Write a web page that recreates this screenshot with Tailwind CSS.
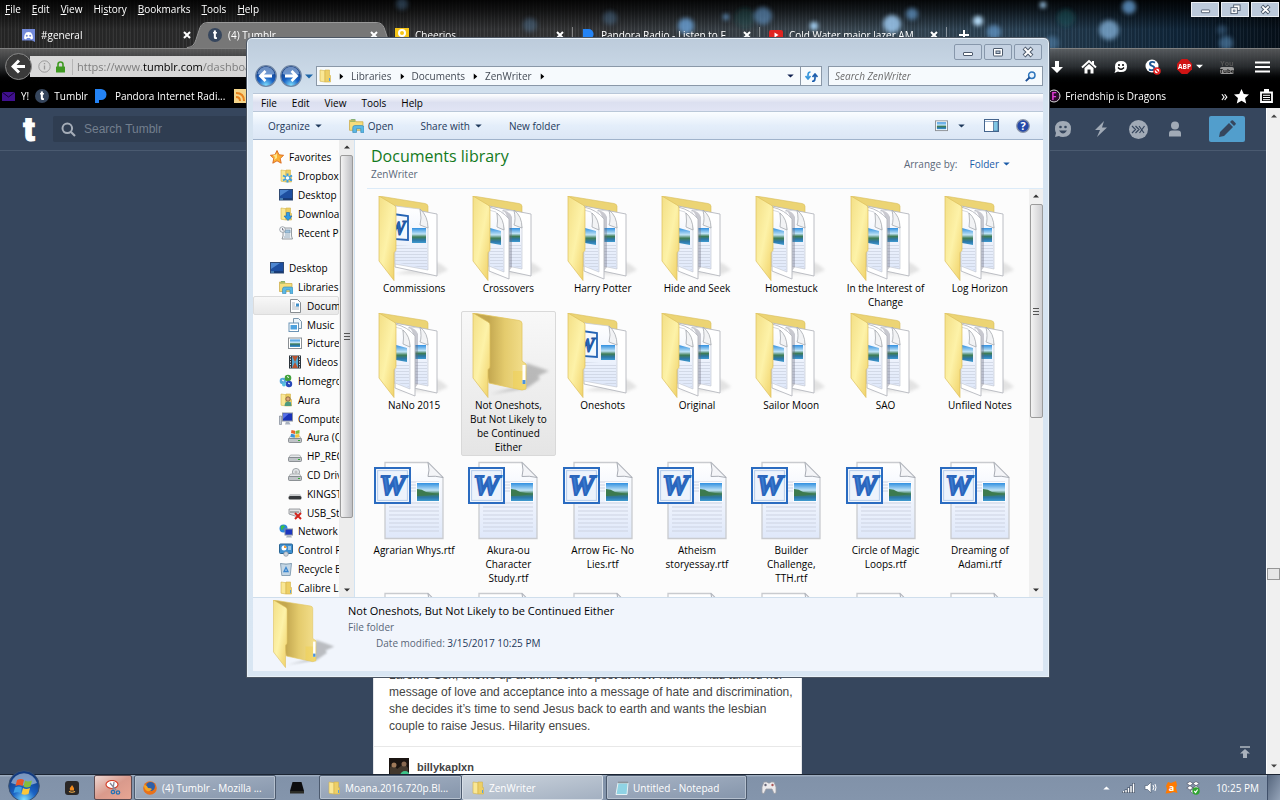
<!DOCTYPE html>
<html lang="en">
  <head>
    <meta charset="UTF-8" />
    <meta name="viewport" content="width=device-width, initial-scale=1.0" />
    <title>(4) Tumblr</title>
    <script src="https://cdn.jsdelivr.net/npm/@tailwindcss/browser@4"></script>
  </head>
  <body class="relative h-screen flex flex-col overflow-hidden bg-[#36465d] font-['Open_Sans',sans-serif] text-[10px] leading-4 text-black">
    <!-- shared icons -->
    <svg class="absolute size-0" aria-hidden="true">
      <defs>
        <linearGradient id="flap" x1="0" x2="1" y2="1"><stop offset="0" stop-color="#f3df86" /><stop offset=".5" stop-color="#fdf2a8" /><stop offset="1" stop-color="#efcf63" /></linearGradient>
        <linearGradient id="back" x1="0" x2="1"><stop offset=".3" stop-color="#c4a850" /><stop offset=".6" stop-color="#e4cb6d" /><stop offset="1" stop-color="#f4e08e" /></linearGradient>
        <linearGradient id="sheet" y1="0" y2="1" x2="0"><stop offset="0" stop-color="#fff" /><stop offset="1" stop-color="#dfe8fa" /></linearGradient>
        <linearGradient id="photo" y1="0" y2="1" x2="0"><stop offset="0" stop-color="#2f8fe0" /><stop offset=".4" stop-color="#bfe2f5" /><stop offset=".6" stop-color="#3f7d55" /><stop offset=".8" stop-color="#2d78a8" /><stop offset="1" stop-color="#3f9bd0" /></linearGradient>
        <radialGradient id="orb" cy=".95" r=".85"><stop offset="0" stop-color="#7fe0ff" /><stop offset=".45" stop-color="#1a62c4" /><stop offset="1" stop-color="#123a80" /></radialGradient>
        <pattern id="lines" width="4" height="3" patternUnits="userSpaceOnUse"><path d="M0 1.5h4" stroke="#c9d0de" stroke-width=".7" /></pattern>
        <filter id="soft"><feGaussianBlur stdDeviation="1.5" /></filter>

        <symbol id="word-logo" viewBox="0 0 36 36">
          <rect x="1" y="1" width="34" height="34" fill="#fff" stroke="#2a6bc0" stroke-width="2" />
          <rect x="3.500" y="3.500" width="29" height="29" fill="#edf3fc" stroke="#b7cdec" />
          <text x="18" y="27.500" text-anchor="middle" font-family="Liberation Serif" font-weight="bold" font-style="italic" font-size="29" fill="#3a7ad0" stroke="#2a66bd" stroke-width="1.800">W</text>
        </symbol>
        <symbol id="rtf" viewBox="0 -1 86 85">
          <path d="M14 3.500h43l15 15V79.500H14z" fill="url(#sheet)" stroke="#c9cbcf" stroke-width="1.300" />
          <path d="M18 23h50M18 26h50M18 29h50M18 32h50M18 44h50M18 48h50M18 52h50M18 56h50M18 60h50M18 64h50M18 68h50M18 72h50" stroke="#cdd3e2" />
          <path d="M57 3.500q2 8 0 14q7-1 15 1z" fill="#f4f5f8" stroke="#a9adb5" />
          <rect x="45" y="23" width="24" height="20" fill="#fafcff" />
          <rect x="46" y="24" width="22" height="18" fill="url(#photo)" />
          <path d="M46 30q5 0 9 3 6 1 13 2-12 2-22 2z" fill="#3d7a4e" />
          <use href="#word-logo" x="3" y="8" width="37" height="37" />
        </symbol>
        <symbol id="folder-back" viewBox="0 0 86 85">
          <path d="M24 78L66 79l11-5q-6-6-12-8z" fill="#999" opacity=".25" filter="url(#soft)" />
          <path d="M8 0l46 7.500q3 .5 3 3V30H24z" fill="#ecd474" stroke="#d9bd5c" stroke-width=".6" />
        </symbol>
        <symbol id="folder-flap" viewBox="0 0 86 85">
          <path d="M8 0l15 9q2 1 2 3v41q0 2-1 2.500q-1 .5-1 2V84.500L8 65z" fill="url(#flap)" stroke="#dcbf5b" stroke-width=".7" />
        </symbol>
        <symbol id="folder-word" viewBox="0 0 86 85">
          <use href="#folder-back" width="86" height="85" />
          <path d="M24 10l42 8v62L24 71z" fill="#fff" stroke="#b5b8be" stroke-width=".9" />
          <path d="M24 10l25 3 8 18v43L24 68z" fill="url(#sheet)" stroke="#c6cad2" stroke-width=".7" />
          <path d="M24 49l32 2v22L24 66z" fill="url(#lines)" />
          <path d="M49 13q2 10 0 16l8 3q0-12-8-19z" fill="#f2f3f5" stroke="#a6a9ae" stroke-width=".8" />
          <rect x="41" y="32" width="14" height="15" fill="url(#photo)" />
          <path d="M22 18l15 2v24l-15-1z" fill="#f4f8fd" stroke="#2463b4" stroke-width="1.800" />
          <text x="17" y="39" font-family="Liberation Serif" font-weight="bold" font-style="italic" font-size="20" fill="#2b69bb" stroke="#1d56a3">W</text>
          <use href="#folder-flap" width="86" height="85" />
        </symbol>
        <symbol id="folder-pages" viewBox="0 0 86 85">
          <use href="#folder-back" width="86" height="85" />
          <path d="M24 10l42 8v62L24 71z" fill="#fff" stroke="#b5b8be" stroke-width=".9" />
          <path d="M38 14l11 1 8 16v42l-19-4z" fill="url(#sheet)" stroke="#c6cad2" stroke-width=".7" />
          <path d="M49 14q2 10 0 15l8 3q0-12-8-18z" fill="#f2f3f5" stroke="#a6a9ae" stroke-width=".8" />
          <rect x="44" y="32" width="11" height="14" fill="url(#photo)" />
          <path d="M44 49h12v23l-12-3z" fill="url(#lines)" />
          <path d="M42 21q-1-5-5-7q8 1 10 7v50l-3 4z" fill="#667" opacity=".35" />
          <path d="M24 11q13 3 20 12V83L24 75z" fill="#fff" stroke="#b5b8be" stroke-width=".9" />
          <path d="M24 14l7 2 8 16v44l-15-6z" fill="url(#sheet)" stroke="#c6cad2" stroke-width=".7" />
          <path d="M32 17q1 9 0 14l7 3q0-11-7-17z" fill="#f2f3f5" stroke="#a6a9ae" stroke-width=".8" />
          <path d="M25 32l11 3v14l-11-2z" fill="url(#photo)" />
          <path d="M25 50l13 2v22l-13-5z" fill="url(#lines)" />
          <use href="#folder-flap" width="86" height="85" />
        </symbol>
        <symbol id="folder-empty" viewBox="0 0 86 85">
          <path d="M61 50q12 4 23 8l-11 5 2 3-13 9-36 6 30-8z" fill="#555" opacity=".35" filter="url(#soft)" />
          <path d="M8 0l46 7.500q3 .5 3 3V48l4 3v25l-4 1-33-7z" fill="url(#back)" stroke="#e3c761" stroke-width=".8" />
          <path d="M48 58h13v18l-4 1-9-2z" fill="#efd04f" opacity=".5" />
          <rect x="57.500" y="52" width="3" height="19" fill="#fff" />
          <rect x="57.500" y="67" width="3" height="4" fill="#4c93dd" />
          <use href="#folder-flap" width="86" height="85" />
        </symbol>

        <symbol id="star" viewBox="0 0 14 14"><path d="M7 .5l2 4.300 4.600.5-3.400 3.200 1 4.700L7 10.800 2.800 13.200l1-4.700L.4 5.300 5 4.800z" fill="#fbb034" stroke="#d9661c" stroke-width=".9" /><path d="M7 3v5l-3 2 1-3-2-2 3-.5z" fill="#ffe58a" /></symbol>
        <symbol id="mini" viewBox="0 0 14 14"><path d="M2 1l5 .7V13l-5-.8z" fill="#f9e795" stroke="#d3b34c" stroke-width=".6" /><path d="M7 1h4.500v5.500h1V13H7z" fill="#edcf66" stroke="#d3b34c" stroke-width=".6" /><path d="M11 9h1v3h-1z" fill="#5aa0dd" /></symbol>
        <symbol id="dropbox" viewBox="0 0 14 14"><use href="#mini" width="14" height="14" /><path d="M8.500 4.500v9M4 6.500l9 5M13 6.500l-9 5" stroke="#3f9fe0" stroke-width="2" /><circle cx="8.500" cy="9" r="1.700" fill="#fff" /></symbol>
        <symbol id="screen" viewBox="0 0 14 14"><rect x=".5" y="1.500" width="13" height="10.500" fill="#1e4fa0" stroke="#314a72" /><path d="M1 2h9L1 8z" fill="#4d86d0" /><path d="M1 10.500h12v1H1z" fill="#132c58" /><path d="M1 10.500h3v1H1z" fill="#74bfe8" /></symbol>
        <symbol id="downloads" viewBox="0 0 14 14"><use href="#mini" width="14" height="14" /><path d="M7.500 5.500h3V9h2.500l-4 4.500L5 9h2.500z" fill="#2f9be6" stroke="#1768b5" stroke-width=".6" /></symbol>
        <symbol id="recent" viewBox="0 0 14 14"><path d="M4 2h8.500v8l1 3H3l1-3z" fill="#eef1f4" stroke="#7f868e" stroke-width=".8" /><path d="M6 4h5v3H6zM6 9h5M5 11h6" fill="#9fc3de" stroke="#7393ac" stroke-width=".7" /><circle cx="3.500" cy="3.500" r="2.800" fill="#f6f8fa" stroke="#8b949c" stroke-width=".8" /><path d="M3.500 2v2H5" fill="none" stroke="#556" stroke-width=".7" /></symbol>
        <symbol id="library" viewBox="0 0 14 14"><path d="M.5 2h5l1 1.500h6.500v8H.5z" fill="#f6dd7c" stroke="#c9a843" stroke-width=".7" /><path d="M1 3h5M2 1.500h4" stroke="#6aa35a" stroke-width=".8" /><path d="M3.500 13.500V9q0-2 2-2H12q2 0 2 2v4.500h-3V10H7v3.500z" fill="#5bb8e4" stroke="#3187b8" stroke-width=".6" /></symbol>
        <symbol id="doc" viewBox="0 0 14 14"><path d="M2.500.5h7l3 3v10h-10z" fill="#fff" stroke="#7d8287" stroke-width=".9" /><path d="M4 4h3M4 6h3M4 8h7M4 10h7" stroke="#9aa4b0" stroke-width=".8" /><path d="M8 4.500h3v3H8z" fill="#3f8fc9" /></symbol>
        <symbol id="music" viewBox="0 0 14 14"><path d="M5.500.5h5l3 3v7h-8z" fill="#eef6fc" stroke="#6e8ba3" stroke-width=".9" /><rect x="1" y="5" width="9.500" height="8.500" fill="#fff" stroke="#6b93b5" /><rect x="2.500" y="7" width="6.500" height="4.500" fill="#4ea2de" /></symbol>
        <symbol id="picture" viewBox="0 0 14 14"><rect x=".5" y="2" width="13" height="10.500" fill="#fff" stroke="#8a8f94" /><rect x="2" y="3.500" width="10" height="7.500" fill="url(#photo)" /></symbol>
        <symbol id="video" viewBox="0 0 14 14"><rect x="1" y=".5" width="12" height="13" fill="#2b333b" /><path d="M4 1h6v12H4z" fill="#53a9d4" /><path d="M4 1l3 6 3-6M4 13l3-6 3 6" fill="#b8532f" /><path d="M2.500 1v12M11.500 1v12" stroke="#dfe5ea" stroke-dasharray="1.300 1.300" /></symbol>
        <symbol id="homegroup" viewBox="0 0 14 14"><circle cx="4" cy="7" r="3.300" fill="#55a7dd" /><circle cx="9" cy="4" r="3.300" fill="#42a13a" /><circle cx="10" cy="10" r="3.200" fill="#2848b8" /><circle cx="5" cy="10.500" r="2" fill="#56c0df" /><path d="M8 2.500l2 1M9 9l2 1M3 6l2 1" stroke="#fff" /></symbol>
        <symbol id="user" viewBox="0 0 14 14"><use href="#mini" width="14" height="14" /><circle cx="9" cy="6" r="2.200" fill="#dba67a" stroke="#6b4b2d" stroke-width=".7" /><path d="M5.500 13q.3-4.500 3.500-4.500t3.500 4.500z" fill="#4d9a7e" /></symbol>
        <symbol id="computer" viewBox="0 0 14 14"><rect x="3.500" y="1" width="10" height="8" fill="#1932b8" stroke="#8991a0" /><path d="M4 1.500h6L4 7z" fill="#5770e8" /><path d="M7 9.500h3l1.500 3H6z" fill="#a9b1be" /><path d="M.5 4h2v8.500h-2z" fill="#c3cad4" stroke="#727b89" stroke-width=".6" /></symbol>
        <symbol id="drive" viewBox="0 0 14 14"><path d="M2.500 6h9l2 3H.5z" fill="#e6e8ea" stroke="#8e9296" stroke-width=".6" /><rect x=".5" y="8.500" width="13" height="4" rx="1" fill="#bfc3c7" stroke="#777c82" stroke-width=".8" /><path d="M10 10.500h2" stroke="#3a3" stroke-width="1.200" /></symbol>
        <symbol id="windrive" viewBox="0 0 14 14"><use href="#drive" width="14" height="14" /><path d="M3.500 0l3.500.7v3.300L3 3z" fill="#e8642b" /><path d="M7.500 1L11.500 0v3.500l-4 .5z" fill="#7dba3c" /><path d="M3 3.700l3.800.8v3.200L2.500 7z" fill="#3a93d9" /><path d="M7.300 4.500l4-.6v3.300l-4 .5z" fill="#f6c53a" /></symbol>
        <symbol id="cd" viewBox="0 0 14 14"><circle cx="8" cy="4" r="3.600" fill="#e3e6e9" stroke="#8b9095" stroke-width=".8" /><circle cx="8" cy="4" r="1" fill="#fff" stroke="#888" stroke-width=".6" /><use href="#drive" width="14" height="14" /></symbol>
        <symbol id="usb" viewBox="0 0 14 14"><path d="M2 7h10l1.500 2.500H.5z" fill="#c9cbcd" /><rect x=".5" y="9" width="13" height="3.500" rx="1.500" fill="#35383b" /></symbol>
        <symbol id="usbx" viewBox="0 0 14 14"><path d="M1 3h11l1 3-3 5-9-3z" fill="#dfe1e3" stroke="#888c90" stroke-width=".8" /><path d="M2 6h9" stroke="#777" /><path d="M7 7l6 6M13 7l-6 6" stroke="#d3241c" stroke-width="2" /></symbol>
        <symbol id="network" viewBox="0 0 14 14"><circle cx="4.500" cy="4.500" r="4" fill="#2a86dc" /><path d="M2 2q3-2 4 1-3 1-2 3-3 0-2-4z" fill="#3cbf45" /><rect x="6" y="5" width="7.500" height="6" fill="#1b35c0" stroke="#838ba0" /><path d="M8 11.500h4l1 2H7z" fill="#a9b1be" /></symbol>
        <symbol id="control" viewBox="0 0 14 14"><rect x=".5" y="1" width="13" height="9.500" rx="1" fill="#3d8fd0" stroke="#2a6594" /><circle cx="5" cy="5" r="2.500" fill="#fff" /><path d="M5 5V2.500A2.500 2.500 0 0 1 7.500 5z" fill="#f29b38" /><path d="M9 4h3M9 6h3" stroke="#fff" /><circle cx="7" cy="11" r="2.300" fill="#cdd4dc" stroke="#8792a0" stroke-width=".7" /></symbol>
        <symbol id="recycle" viewBox="0 0 14 14"><path d="M1.500 1.500h11l-1.300 12H2.800z" fill="#c3d6e5" stroke="#7390a8" stroke-width=".8" /><path d="M1.500 1.500q5.500 2 11 0" fill="#fff" stroke="#7390a8" stroke-width=".7" /><path d="M5 9.500L7 5.500l2 4z" fill="none" stroke="#3a86cf" stroke-width="1.300" /></symbol>

        <symbol id="caret" viewBox="0 0 8 5"><path d="M0 .5h8L4 4.500z" fill="currentColor" /></symbol>
        <symbol id="crumb" viewBox="0 0 5 8"><path d="M.5.5v7L4.500 4z" fill="currentColor" /></symbol>
        <symbol id="win-min" viewBox="0 0 12 12"><rect x="1.500" y="6.500" width="9" height="3" rx=".5" fill="#fff" stroke="#4d5a6c" /></symbol>
        <symbol id="win-max" viewBox="0 0 12 12"><rect x="1.500" y="2.500" width="9" height="7.500" rx=".5" fill="#fff" stroke="#4d5a6c" /><rect x="4" y="5" width="4" height="2.500" fill="#b9c8da" stroke="#4d5a6c" /></symbol>
        <symbol id="win-restore" viewBox="0 0 12 12"><rect x="4" y="1" width="7" height="6" fill="#fff" stroke="#4d5a6c" /><rect x="1" y="4" width="7" height="6.500" fill="#fff" stroke="#4d5a6c" /><rect x="3.500" y="6.500" width="2" height="1.500" fill="#b9c8da" stroke="#4d5a6c" stroke-width=".7" /></symbol>
        <symbol id="win-close" viewBox="0 0 12 12"><path d="M2 2l8 8M10 2l-8 8" stroke="#4d5a6c" stroke-width="4" /><path d="M2.500 2.500l7 7M9.500 2.500l-7 7" stroke="#fff" stroke-width="2" /></symbol>
        <symbol id="tab-close" viewBox="0 0 8 8"><path d="M1 1l6 6M7 1L1 7" stroke="#fff" stroke-width="2" /></symbol>
        <symbol id="tumblr" viewBox="0 0 14 14"><circle cx="7" cy="7" r="7" fill="#36465d" /><text x="7" y="10.800" text-anchor="middle" font-family="Roboto" font-weight="900" font-size="12" fill="#fff">t</text></symbol>
        <symbol id="pandora" viewBox="0 0 14 14"><path d="M1 0h6a5.500 5.500 0 0 1 0 11H5v3H1z" fill="#2383f5" /></symbol>
      </defs>
    </svg>

    <!-- browser window -->
    <header class="relative shrink-0 bg-black text-white">
      <svg class="absolute right-0 top-0 h-[84px] w-[1280px]" viewBox="0 0 1280 84">
        <defs>
          <linearGradient id="sky" x1="0" x2="1"><stop offset="0" stop-color="#282828" /><stop offset=".45" stop-color="#343537" /><stop offset=".65" stop-color="#3d4a54" /><stop offset=".8" stop-color="#294256" /><stop offset=".92" stop-color="#10263a" /><stop offset="1" stop-color="#06101a" /></linearGradient>
          <linearGradient id="dusk" x2="0" y2="1"><stop offset="0" stop-color="#000" stop-opacity=".9" /><stop offset=".12" stop-color="#000" stop-opacity=".65" /><stop offset=".35" stop-color="#000" stop-opacity="0" /></linearGradient>
          <pattern id="weave" width="7" height="84" patternUnits="userSpaceOnUse"><path d="M1.500 0v84M4.500 0v84" stroke="#fff" stroke-opacity=".05" /><path d="M3 0v84M6 0v84" stroke="#000" stroke-opacity=".2" /></pattern>
          <filter id="glow" x="-10%" y="-50%" width="120%" height="200%"><feGaussianBlur stdDeviation="2" /></filter>
        </defs>
        <rect width="1280" height="84" fill="url(#sky)" />
        <rect width="1280" height="84" fill="url(#weave)" />
        <rect width="1280" height="84" fill="url(#dusk)" />
        <g filter="url(#glow)" fill="#6aa3d8">
          <circle cx="402" cy="4" r="6" opacity=".3" /><circle cx="530" cy="25" r="7" opacity=".3" /><circle cx="610" cy="18" r="7" opacity=".3" />
          <circle cx="686" cy="26" r="8" opacity=".8" /><circle cx="726" cy="17" r="3" opacity=".8" /><circle cx="763" cy="16" r="9" opacity=".55" />
          <circle cx="814" cy="26" r="4" fill="#a5d2f5" /><circle cx="745" cy="18" r="10" fill="#1c6a70" opacity=".25" />
          <circle cx="892" cy="24" r="9" fill="#9cc8ee" opacity=".85" /><circle cx="912" cy="14" r="6" opacity=".65" /><circle cx="978" cy="21" r="5" fill="#b5dbf8" />
          <circle cx="994" cy="32" r="7" opacity=".65" /><circle cx="1043" cy="5" r="3" fill="#a5d2f5" /><circle cx="1109" cy="30" r="10" fill="#8bbce6" opacity=".7" />
          <circle cx="1129" cy="7" r="7" opacity=".75" /><circle cx="1226" cy="43" r="7" opacity=".5" /><circle cx="1052" cy="43" r="7" opacity=".4" />
          <circle cx="1222" cy="30" r="5" opacity=".3" /><circle cx="1066" cy="18" r="9" fill="#1c6a70" opacity=".35" />
        </g>
      </svg>

      <div class="relative flex h-[22px] items-start">
        <nav class="flex h-[18px] items-center gap-[11px] pl-[5px]">
          <button><u>F</u>ile</button>
          <button><u>E</u>dit</button>
          <button><u>V</u>iew</button>
          <button>Hi<u>s</u>tory</button>
          <button><u>B</u>ookmarks</button>
          <button><u>T</u>ools</button>
          <button><u>H</u>elp</button>
        </nav>
        <div class="ml-auto mt-0.5 flex gap-0.5 pr-px">
          <button aria-label="Minimize" class="grid h-[15px] w-7 place-items-center border border-white/70 bg-[#bccadb]"><svg class="size-[11px]"><use href="#win-min" /></svg></button>
          <button aria-label="Restore" class="grid h-[15px] w-7 place-items-center border border-white/70 bg-[#bccadb]"><svg class="size-[11px]"><use href="#win-restore" /></svg></button>
          <button aria-label="Close" class="grid h-[15px] w-7 place-items-center border border-white/70 bg-[#bccadb]"><svg class="size-[11px]"><use href="#win-close" /></svg></button>
        </div>
      </div>

      <div class="relative flex h-[26px] items-center whitespace-nowrap pl-3">
        <div class="flex w-[187px] items-center gap-[6px] pl-[10px] pr-2">
          <svg class="h-[13px] w-[13px]" viewBox="0 0 13 13"><path d="M0 0h13v13l-3-1.500H0z" fill="#7289da" /><path d="M2 9.500q0-4 2-6 2.500-1 5 0 2 2 2 6l-2 1-1-1.500H5L4 10.500z" fill="#fff" /><circle cx="4.800" cy="6.700" r="1" fill="#7289da" /><circle cx="8.200" cy="6.700" r="1" fill="#7289da" /></svg>
          <span class="grow">#general</span>
          <button aria-label="Close tab"><svg class="size-2"><use href="#tab-close" /></svg></button>
        </div>
        <div class="relative flex h-full w-[187px] items-center gap-[6px] pl-[9px] pr-2">
          <svg class="absolute -left-3 top-0 h-[26px] w-[210px]" viewBox="0 0 210 26"><path d="M0 26q7 0 9-8l4-12q2-5 8-5h168q6 0 8 5l4 12q2 8 9 8z" fill="#777" /><path d="M0 25.500q7 0 9-8l4-12q2-5 8-5h168q6 0 8 5l4 12q2 8 9 8" fill="none" stroke="#999" /></svg>
          <svg class="relative size-[14px]"><use href="#tumblr" /></svg>
          <span class="relative grow">(4) Tumblr</span>
          <button aria-label="Close tab" class="relative"><svg class="size-2"><use href="#tab-close" /></svg></button>
        </div>
        <div class="flex w-[187px] items-center gap-[6px] border-r border-white/40 pl-[9px] pr-2">
          <svg class="size-[14px]" viewBox="0 0 14 14"><rect width="14" height="14" fill="#f5c518" /><circle cx="7" cy="5" r="3" fill="none" stroke="#fff" stroke-width="2" /></svg>
          <span class="grow">Cheerios</span>
          <button aria-label="Close tab"><svg class="size-2"><use href="#tab-close" /></svg></button>
        </div>
        <div class="flex w-[187px] items-center gap-[6px] border-r border-white/40 pl-[9px] pr-2">
          <svg class="size-[13px] shrink-0"><use href="#pandora" /></svg>
          <span class="grow">Pandora Radio - Listen to F...</span>
          <button aria-label="Close tab"><svg class="size-2"><use href="#tab-close" /></svg></button>
        </div>
        <div class="flex w-[187px] items-center gap-[6px] border-r border-white/40 pl-[9px] pr-2">
          <svg class="size-[14px] shrink-0" viewBox="0 0 14 14"><rect y="2" width="14" height="10" rx="2" fill="#e02420" /><path d="M5.500 4.500v5L9.500 7z" fill="#fff" /></svg>
          <span class="grow">Cold Water major lazer AM...</span>
          <button aria-label="Close tab"><svg class="size-2"><use href="#tab-close" /></svg></button>
        </div>
        <button aria-label="New tab" class="pl-3"><svg class="size-[10px]" viewBox="0 0 10 10"><path d="M5 0v10M0 5h10" stroke="#fff" stroke-width="2" /></svg></button>
      </div>

      <div class="relative flex h-9 items-center justify-between border-t border-white/50 bg-linear-to-b from-[#666]/80 via-[#2c2e30]/90 to-black pl-[30px]">
        <button aria-label="Back" class="absolute left-[5px] top-1 z-10 grid size-[27px] place-items-center rounded-full border border-[#888] bg-[#3a3a3a]"><svg class="size-[15px]" viewBox="0 0 15 15"><path d="M8 1.500L2 7.500l6 6M2.500 7.500H14" fill="none" stroke="#fff" stroke-width="3" /></svg></button>
        <div class="flex h-[21px] w-[940px] items-center bg-linear-to-r from-[#d9d9d9] to-[#c8c8c8] pl-2">
          <svg class="size-[13px]" viewBox="0 0 13 13"><circle cx="6.500" cy="6.500" r="5.700" fill="none" stroke="#999" /><path d="M6.500 5.500v4M6.500 3v1.300" stroke="#999" stroke-width="1.300" /></svg>
          <svg class="ml-1 h-3 w-[11px]" viewBox="0 0 11 12"><path d="M3 6V3.500q0-2.500 2.500-2.500T8 3.500V6" fill="none" stroke="#3f9a22" stroke-width="1.600" /><rect x="1" y="5.500" width="9" height="6" rx=".5" fill="#3f9a22" /></svg>
          <div role="textbox" aria-label="Address" contenteditable="true" class="ml-[6px] border-l border-[#b5b5b5] pl-1 text-[11px] text-[#7d7d7d]">https://www.<span class="text-black">tumblr.com</span>/dashboard</div>
        </div>
        <div class="flex items-center gap-4 pr-[10px]">
          <button aria-label="Downloads"><svg class="size-4" viewBox="0 0 16 16"><path d="M6 2h4v6h4l-6 6-6-6h4z" fill="#fff" /></svg></button>
          <button aria-label="Home"><svg class="size-4" viewBox="0 0 16 16"><path d="M1 8.500L8 2l7 6.500" fill="none" stroke="#fff" stroke-width="2" /><path d="M3.500 9L8 5l4.500 4v5.500h-3v-4h-3v4h-3zM11 2h2v3h-2z" fill="#fff" /></svg></button>
          <button aria-label="Hello"><svg class="size-4" viewBox="0 0 16 16"><path d="M8 2q6 0 6 5.500T8 13q-2 0-3-.5L1.500 14l1-3Q2 10 2 7.500 2 2 8 2z" fill="#fff" /><circle cx="6" cy="6" r="1" /><circle cx="10" cy="6" r="1" /><path d="M5 8.500q3 3.500 6 0" fill="none" stroke="#000" stroke-width="1.300" /></svg></button>
          <button aria-label="NoScript"><svg class="size-4" viewBox="0 0 16 16"><circle cx="7" cy="7" r="6.500" fill="#fff" /><text x="7" y="12" text-anchor="middle" font-family="Open Sans" font-weight="bold" font-size="14" fill="#1f5793">S</text><circle cx="12" cy="12" r="3" fill="#fff" stroke="#e02020" stroke-width="1.500" /><path d="M10 10l4 4" stroke="#e02020" stroke-width="1.500" /></svg></button>
          <button aria-label="Adblock Plus" class="flex items-center gap-1"><svg class="size-[15px]" viewBox="0 0 16 16"><path d="M5 0h6l5 5v6l-5 5H5l-5-5V5z" fill="#d01414" /><text x="8" y="10.500" text-anchor="middle" font-family="Open Sans" font-weight="bold" font-size="7" fill="#fff">ABP</text></svg><svg class="h-[5px] w-[7px]"><use href="#caret" /></svg></button>
          <button aria-label="YouTube"><svg class="size-4" viewBox="0 0 16 16"><text x="8" y="7" text-anchor="middle" font-family="Open Sans" font-weight="bold" font-size="7" fill="#555">You</text><rect x="1" y="8" width="14" height="7" rx="2" fill="#999" /><text x="8" y="14" text-anchor="middle" font-family="Open Sans" font-weight="bold" font-size="6" fill="#111">Tube</text></svg></button>
          <button aria-label="Menu" class="ml-1"><svg class="h-3 w-[15px]" viewBox="0 0 15 12"><path d="M0 1.500h15M0 6h15M0 10.500h15" stroke="#fff" stroke-width="2.200" /></svg></button>
        </div>
      </div>

      <div class="relative flex h-6 items-center justify-between bg-black pl-0.5">
        <div class="flex items-center">
          <svg class="h-[9px] w-[13px]" viewBox="0 0 13 9"><rect width="13" height="9" fill="#40108e" /><path d="M0 0l6.500 5L13 0" fill="none" stroke="#120030" /></svg>
          <a href="#" class="ml-[6px]">Y!</a>
          <svg class="ml-[6px] size-[14px]"><use href="#tumblr" /></svg>
          <a href="#" class="ml-[5px]">Tumblr</a>
          <svg class="ml-[6px] size-[14px]"><use href="#pandora" /></svg>
          <a href="#" class="ml-[7px]">Pandora Internet Radi...</a>
          <svg class="ml-[9px] size-[14px]" viewBox="0 0 14 14"><rect width="14" height="14" fill="#f4d58a" /><path d="M2 4q8 0 8 8M2 8q4 0 4 4" fill="none" stroke="#e8811c" stroke-width="2" /></svg>
        </div>
        <div class="flex items-center pr-[7px]">
          <svg class="size-[14px]" viewBox="0 0 14 14"><circle cx="7" cy="7" r="6" fill="#2b0d2b" stroke="#ddd" /><text x="7" y="11" text-anchor="middle" font-family="Open Sans" font-weight="bold" font-size="10" fill="#e23bd8">F</text></svg>
          <a href="#" class="ml-1">Friendship is Dragons</a>
          <button class="ml-[55px] text-sm leading-4" aria-label="More bookmarks">»</button>
          <svg class="ml-[6px] size-[15px]" viewBox="0 0 14 14"><path d="M7 0l2.100 4.600 4.900.5-3.700 3.400L11.400 13.500 7 11l-4.400 2.500L3.700 8.500 0 5.100l4.900-.5z" fill="#fff" /></svg>
          <svg class="ml-[11px] h-[14px] w-[13px]" viewBox="0 0 13 14"><path d="M1 3.500h11V13H1z" fill="none" stroke="#fff" stroke-width="1.800" /><path d="M4 0h5v3H4z" fill="#fff" /><path d="M3 6.300h7M3 8.500h7M3 10.700h7" stroke="#fff" /></svg>
        </div>
      </div>
    </header>

    <main class="flex min-h-0 grow font-['Liberation_Sans',sans-serif] text-xs text-[#444]">
      <div class="flex min-w-0 grow flex-col justify-between overflow-hidden">
        <div class="flex h-[43px] shrink-0 items-center border-b border-[#4a5a70] pl-[15px] pr-[21px]">
          <a href="#" aria-label="Tumblr" class="mr-2"><svg class="h-7 w-[28px]" viewBox="0 0 28 28"><text x="14" y="26" text-anchor="middle" font-family="Roboto" font-weight="900" font-size="34" fill="#fff" stroke="#fff">t</text></svg></a>
          <label class="ml-0.5 flex h-[26px] w-[400px] items-center rounded-xs bg-[#2f3d51] pl-2">
            <svg class="size-[15px]" viewBox="0 0 15 15"><circle cx="6.300" cy="6.300" r="4.800" fill="none" stroke="#a5adb8" stroke-width="2" /><path d="M10 10l4 4" stroke="#a5adb8" stroke-width="2.200" /></svg>
            <input type="search" aria-label="Search Tumblr" placeholder="Search Tumblr" class="ml-2 grow bg-transparent placeholder:text-[#737f8e]" />
          </label>
          <div class="ml-auto flex items-center gap-5 text-[#a1aab6]">
            <button aria-label="Messages"><svg class="size-[18px]" viewBox="0 0 18 18"><path d="M9 1q8 0 8 8t-8 8q-3 0-4-1l-4 1 1-4Q1 11 1 9q0-8 8-8z" fill="currentColor" /><circle cx="6.500" cy="7" r="1.300" fill="#36465d" /><circle cx="11.500" cy="7" r="1.300" fill="#36465d" /><path d="M5 10.500h8q-4 6-8 0z" fill="#36465d" /></svg></button>
            <button aria-label="Activity" class="ml-px"><svg class="size-4" viewBox="0 0 16 16"><path d="M11 0L2 9h5l-3 7L14 6.500H9z" fill="currentColor" /></svg></button>
            <button aria-label="Extensions"><svg class="size-[19px]" viewBox="0 0 19 19"><circle cx="9.500" cy="9.500" r="9.500" fill="currentColor" /><path d="M3 6l3.500 3.500L3 13M6.500 6l3.500 3.500L6.500 13M10 6l5 7M15.500 6l-5 7" fill="none" stroke="#36465d" stroke-width="1.200" /></svg></button>
            <button aria-label="Account"><svg class="h-4 w-[14px]" viewBox="0 0 14 16"><circle cx="7" cy="4.500" r="4" fill="currentColor" /><path d="M1 15.500v-3q0-3 3-3h6q3 0 3 3v3z" fill="currentColor" /></svg></button>
            <button aria-label="Make a post" class="ml-[7px] grid h-[26px] w-9 place-items-center rounded-xs bg-[#529ecc]"><svg class="size-[18px]" viewBox="0 0 18 18"><path d="M1 17l1-5L11 3l4 4-9 9zM12 2l1.500-1.500q.8-.6 1.500 0L17.500 3q.6.700 0 1.500L16 6z" fill="#36465d" /></svg></button>
          </div>
        </div>
        <div class="flex">
          <article class="ml-[373px] w-[429px] border-x border-[#e4e6e9] bg-white">
            <p class="whitespace-nowrap px-[15px] pb-[11px] leading-[17px]">Larome-Sori, shows up at their door. Upset at how humans had turned her<br />message of love and acceptance into a message of hate and discrimination,<br />she decides it’s time to send Jesus back to earth and wants the lesbian<br />couple to raise Jesus. Hilarity ensues.</p>
            <div class="flex h-7 items-start gap-2 overflow-hidden border-t border-[#e8e8e8] px-[15px] pt-[11px]">
              <svg class="size-5 shrink-0" viewBox="0 0 20 20"><rect width="20" height="20" fill="#1b1512" /><path d="M1 20V9l4-3 3 5 4-3 3-3 4 5v10z" fill="#43382d" /><circle cx="5" cy="7" r="2.500" fill="#a07a5a" /><circle cx="15" cy="6" r="2.500" fill="#8a6a52" /><circle cx="16" cy="18" r="5" fill="#3fc48a" /></svg>
              <b class="pt-px text-[11px] leading-4">billykaplxn</b>
            </div>
          </article>
          <button aria-label="Back to top" class="mb-4 ml-auto mr-4 self-end"><svg class="h-3 w-[10px]" viewBox="0 0 10 12"><path d="M0 1h10" stroke="#a9b1bc" stroke-width="1.600" /><path d="M5 3l5 4.500H7V12H3V7.500H0z" fill="#a9b1bc" /></svg></button>
        </div>
      </div>
      <div class="flex w-[14px] shrink-0 flex-col items-center border-l border-white bg-[#f0f0f0] py-1.5 text-[#444]">
        <svg class="h-1 w-[6px] rotate-180"><use href="#caret" /></svg>
        <div class="grow-71"></div>
        <div class="h-3 w-[13px] border border-[#979797] bg-[#e6e6e6]"></div>
        <div class="grow-29"></div>
        <svg class="h-1 w-[6px]"><use href="#caret" /></svg>
      </div>
    </main>

    <!-- explorer window -->
    <section class="absolute left-[246px] top-[37px] flex h-[641px] w-[804px] flex-col overflow-hidden rounded-t-md border border-[#4c5663] bg-linear-to-b from-[#bccbdb] via-[#d6e4f1] via-10% to-[#d9e6f3] px-[6px] pb-[6px] text-[#1e395b] shadow-[inset_0_0_0_1px_#e8f1f9]">
      <div class="flex h-[26px] shrink-0 items-start justify-end gap-0.5 pr-px pt-[6px]">
        <button aria-label="Minimize" class="grid h-4 w-[28px] place-items-center rounded-xs border border-[#8797ab] bg-[#c5d2e2]"><svg class="size-3"><use href="#win-min" /></svg></button>
        <button aria-label="Maximize" class="grid h-4 w-[28px] place-items-center rounded-xs border border-[#8797ab] bg-[#c5d2e2]"><svg class="size-3"><use href="#win-max" /></svg></button>
        <button aria-label="Close" class="grid h-4 w-[28px] place-items-center rounded-xs border border-[#8797ab] bg-[#c5d2e2]"><svg class="size-3"><use href="#win-close" /></svg></button>
      </div>
      <div class="flex h-[29px] shrink-0 items-start pt-px">
        <div class="flex items-center gap-[3px] pl-0.5">
          <button aria-label="Back"><svg class="size-[22px]" viewBox="0 0 22 22"><circle cx="11" cy="11" r="10.300" fill="url(#orb)" stroke="#6f86a5" stroke-width="1.200" /><path d="M2.500 9a8.600 8.600 0 0 1 17 0q-8 3-17 0z" fill="#a9c6ec" opacity=".6" /><path d="M10.500 6l-5 5 5 5M6 11h11" fill="none" stroke="#fff" stroke-width="2.800" /></svg></button>
          <button aria-label="Forward"><svg class="size-[22px]" viewBox="0 0 22 22"><circle cx="11" cy="11" r="10.300" fill="url(#orb)" stroke="#6f86a5" stroke-width="1.200" /><path d="M2.500 9a8.600 8.600 0 0 1 17 0q-8 3-17 0z" fill="#a9c6ec" opacity=".6" /><path d="M11.500 6l5 5-5 5M16 11H5" fill="none" stroke="#fff" stroke-width="2.800" /></svg></button>
          <svg class="h-[5px] w-2 text-[#1d66a8]"><use href="#caret" /></svg>
        </div>
        <div class="ml-[3px] mt-px flex h-5 grow items-center border border-[#8a98a8] bg-[#f6fafd] pl-[1px] text-[#444b55]">
          <svg class="size-[14px]"><use href="#mini" /></svg>
          <svg class="ml-[7px] h-[7px] w-[5px] text-black"><use href="#crumb" /></svg>
          <button class="ml-[7px]">Libraries</button>
          <svg class="ml-[8px] h-[7px] w-[5px] text-black"><use href="#crumb" /></svg>
          <button class="ml-[7px]">Documents</button>
          <svg class="ml-[8px] h-[7px] w-[5px] text-black"><use href="#crumb" /></svg>
          <button class="ml-[7px]">ZenWriter</button>
          <svg class="ml-[8px] h-[7px] w-[5px] text-black"><use href="#crumb" /></svg>
          <svg class="ml-auto mr-[6px] h-1 w-[7px] text-[#102050]"><use href="#caret" /></svg>
          <button aria-label="Refresh" class="grid h-full w-[21px] place-items-center border-l border-[#8a98a8]"><svg class="h-[11px] w-[13px]" viewBox="0 0 13 11"><path d="M5.500 1Q3 1 3 4v3M.5 5L3 8l2.500-3" fill="none" stroke="#3897dc" stroke-width="1.700" /><path d="M7 10.500q3 0 3-3V4M7.500 6L10 3l2.500 3" fill="none" stroke="#1d5fae" stroke-width="1.700" /></svg></button>
        </div>
        <label class="ml-[6px] mt-px flex h-5 w-[215px] items-center border border-[#8a98a8] bg-[#f6fafd] px-[6px]">
          <input type="search" aria-label="Search ZenWriter" placeholder="Search ZenWriter" class="min-w-0 grow bg-transparent italic placeholder:text-[#6d6d6d]" />
          <svg class="size-[11px]" viewBox="0 0 11 11"><circle cx="6.800" cy="4.200" r="3.200" fill="#eaf4fd" stroke="#2f76bd" stroke-width="1.500" /><path d="M4.500 6.500L.8 10.200" stroke="#1d4f94" stroke-width="1.900" /></svg>
        </label>
      </div>

      <nav class="flex h-[19px] shrink-0 items-center gap-[15px] border-y border-[#b9c7d8] bg-linear-to-b from-white via-[#dce0f0] via-50% to-[#e1e4f4] pl-2 text-black">
        <button>File</button>
        <button>Edit</button>
        <button>View</button>
        <button>Tools</button>
        <button>Help</button>
      </nav>
      <div class="flex h-7 shrink-0 items-center border-b border-[#a0b3cb] bg-linear-to-b from-[#fafdff] via-[#e4eefa] via-50% to-[#dce7f5] pl-[15px] pr-[13px]">
        <button class="flex items-center gap-[5px]">Organize <svg class="h-1 w-[7px]"><use href="#caret" /></svg></button>
        <button class="ml-[27px] flex items-center gap-1"><svg class="size-[15px]"><use href="#library" /></svg>Open</button>
        <button class="ml-[27px] flex items-center gap-[5px]">Share with <svg class="h-1 w-[7px]"><use href="#caret" /></svg></button>
        <button class="ml-[27px]">New folder</button>
        <button aria-label="Change your view" class="ml-auto flex items-center gap-[10px]"><svg class="size-[13px]"><use href="#picture" /></svg><svg class="h-1 w-[7px]"><use href="#caret" /></svg></button>
        <button aria-label="Preview pane" class="ml-[19px]"><svg class="h-[13px] w-[15px]" viewBox="0 0 15 13"><rect x=".5" y=".5" width="14" height="12" fill="#fff" stroke="#44648c" /><path d="M1 2.500h13" stroke="#9db4d0" /><rect x="9.500" y="2.500" width="4.500" height="9.500" fill="#7fc6e4" stroke="#44648c" stroke-width=".7" /></svg></button>
        <button aria-label="Help" class="ml-[17px]"><svg class="size-[14px]" viewBox="0 0 14 14"><circle cx="7" cy="7" r="6.300" fill="#2448a8" stroke="#8b95a8" stroke-width="1.200" /><text x="7" y="11" text-anchor="middle" font-family="Open Sans" font-weight="bold" font-size="11" fill="#fff">?</text></svg></button>
      </div>

      <div class="flex min-h-0 grow bg-[#fcfcfc] text-black">
        <div class="flex w-[102px] shrink-0 border-r border-[#d2e3f2]">
          <ul id="tree" class="flex min-w-0 grow flex-col overflow-hidden pt-2"></ul>
          <div class="flex w-[15px] shrink-0 flex-col items-center bg-[#ededed] py-[5px] text-[#333]">
            <svg class="h-1 w-[6px] rotate-180"><use href="#caret" /></svg>
            <div class="mt-[6px] flex h-[363px] w-[13px] flex-col items-center justify-center gap-px rounded-xs border border-[#9b9b9b] bg-linear-to-r from-[#f3f3f3] to-[#bfc0c4]">
              <i class="h-px w-[6px] bg-[#555]"></i><i class="mt-px h-px w-[6px] bg-[#555]"></i><i class="mt-px h-px w-[6px] bg-[#555]"></i>
            </div>
            <svg class="mt-auto h-1 w-[6px]"><use href="#caret" /></svg>
          </div>
        </div>
        <div class="flex min-w-0 grow flex-col">
          <div class="ml-3 flex h-[49px] shrink-0 items-start border-b border-[#dcebf8] pl-1">
            <div>
              <h1 class="pt-1 text-base leading-6 text-[#137a1c]">Documents library</h1>
              <p class="leading-3 text-[#5a6779]">ZenWriter</p>
            </div>
            <div class="ml-auto flex gap-3 pr-[33px] pt-4 text-[#5a6779]">
              <span>Arrange by:</span>
              <button class="flex items-center gap-1 text-[#1a5ba8]">Folder <svg class="h-1 w-[7px]"><use href="#caret" /></svg></button>
            </div>
          </div>
          <div class="flex min-h-0 grow">
            <div id="files" class="grid min-w-0 grow grid-cols-7 content-start overflow-hidden pl-3 pr-0.5 pt-[5px] text-center leading-[14px]"></div>
            <div class="flex w-[14px] shrink-0 flex-col items-center bg-[#f0f0f0] py-[5px] text-[#333]">
              <svg class="h-1 w-[6px] rotate-180"><use href="#caret" /></svg>
              <div class="mt-[6px] flex h-[214px] w-[13px] flex-col items-center justify-center gap-px rounded-xs border border-[#9b9b9b] bg-linear-to-r from-[#f3f3f3] to-[#cfcfd2]">
                <i class="h-px w-[6px] bg-[#555]"></i><i class="mt-px h-px w-[6px] bg-[#555]"></i><i class="mt-px h-px w-[6px] bg-[#555]"></i>
              </div>
              <svg class="mt-auto h-1 w-[6px]"><use href="#caret" /></svg>
            </div>
          </div>
        </div>
      </div>

      <footer class="flex h-[74px] shrink-0 border-t border-[#cfdeec] bg-[#f1f5fc] pl-[14px] pt-[2px]">
        <svg class="h-[68px] w-[69px]"><use href="#folder-empty" /></svg>
        <div class="pl-3 pt-[3px]">
          <p class="text-[11px] leading-4 text-black">Not Oneshots, But Not Likely to be Continued Either</p>
          <p class="text-[#5a6779]">File folder</p>
          <p class="pl-7"><span class="text-[#5a6779]">Date modified:</span> 3/15/2017 10:25 PM</p>
        </div>
      </footer>
    </section>

    <!-- taskbar -->
    <footer class="relative flex h-[26px] shrink-0 items-stretch border-t border-[#1c2533] bg-linear-to-b from-[#a3b1c3] via-[#8192a9] via-10% to-[#8495ac] text-white">
      <button aria-label="Start" class="absolute -top-[5px] left-2"><svg class="size-8" viewBox="0 0 32 32"><circle cx="16" cy="16" r="15.300" fill="url(#orb)" stroke="#39506e" /><path d="M3 13a13.500 13.500 0 0 1 26 0q-13 5-26 0z" fill="#cfe0ee" opacity=".55" /><path d="M9 10q4-2 7 0l-1.500 6q-3-2-7 0z" fill="#e8562a" /><path d="M17 10.500q3 2 7 0l-1.500 6q-4 2-7 0z" fill="#86bd3b" /><path d="M7 17.500q4-2 7 0L12.500 23q-3-1.500-7 0z" fill="#3f9fe4" /><path d="M15 18q3 2 7 0l-1.500 6q-4 1.500-7 0z" fill="#fbc73a" /></svg></button>
      <button aria-label="Media" class="ml-[65px] w-[14px]"><svg class="size-[14px]" viewBox="0 0 14 14"><rect width="14" height="14" rx="3" fill="#2a2726" /><path d="M7.500 2q-1 2 .5 3.500T9 9.500H5Q4 7 6 5.500 7.500 4 7.500 2z" fill="#f08a1e" /><path d="M4 10.500q3 1.500 6 0" fill="none" stroke="#f6b04a" stroke-width="1.200" /></svg></button>
      <button aria-label="Snipping Tool" class="ml-[15px] grid w-[38px] place-items-center rounded-xs border border-[#5c4a50] bg-linear-to-br from-[#ecd7d3] via-[#d99a8c] to-[#e8a593]"><svg class="size-4" viewBox="0 0 16 16"><ellipse cx="7" cy="4.500" rx="6" ry="4" fill="#fff" stroke="#d4402a" stroke-width="1.200" /><path d="M5 3l6 7M9 2l-1 8" stroke="#889" stroke-width="1.300" /><circle cx="8" cy="12" r="1.700" fill="none" stroke="#2472b4" stroke-width="1.300" /><circle cx="13" cy="12.500" r="1.700" fill="none" stroke="#2472b4" stroke-width="1.300" /></svg></button>
      <button class="ml-0.5 flex w-[142px] items-center gap-[5px] rounded-xs border border-[#4c5a6e] bg-linear-to-br from-[#a9b5c6] to-[#8595ab] pl-2 shadow-[inset_0_0_0_1px_#b5c0ce]"><svg class="size-[14px]" viewBox="0 0 14 14"><circle cx="7" cy="7" r="6.800" fill="#e8711a" /><circle cx="7.500" cy="5.500" r="4.500" fill="#2d5fa8" /><path d="M1 4q3 0 4 3 3 0 4 1-2 3-5 2-3-2-3-6z" fill="#f6a623" /></svg>(4) Tumblr - Mozilla ...</button>
      <button aria-label="Drive" class="ml-[14px] w-[14px]"><svg class="h-3 w-[14px]" viewBox="0 0 14 12"><path d="M2.500 0h9L14 9H0z" fill="#0c0c0e" /><path d="M0 9h14v2.500H0z" fill="#2b2b25" /></svg></button>
      <button class="ml-[15px] flex w-[143px] items-center gap-[4px] rounded-xs border border-[#4c5a6e] bg-linear-to-br from-[#a9b5c6] to-[#8595ab] pl-[7px] shadow-[inset_0_0_0_1px_#b5c0ce]"><svg class="size-[14px]"><use href="#mini" /></svg>Moana.2016.720p.Bl...</button>
      <button class="flex w-[141px] items-center gap-[4px] rounded-xs border border-[#d8dfe7] bg-linear-to-br from-[#ccd4dd] to-[#a3b0c1] pl-2"><svg class="size-[14px]"><use href="#mini" /></svg>ZenWriter</button>
      <button class="ml-[3px] flex w-[141px] items-center gap-[4px] rounded-xs border border-[#4c5a6e] bg-linear-to-br from-[#a9b5c6] to-[#8595ab] pl-2 shadow-[inset_0_0_0_1px_#b5c0ce]"><svg class="size-[14px]" viewBox="0 0 14 14"><path d="M3 2h10l-1 11.500H1z" fill="#8fd3e4" stroke="#e8f2f4" /><path d="M3.500 1.500h10" stroke="#555" stroke-width="1.500" stroke-dasharray="1 1" /></svg>Untitled - Notepad</button>
      <button aria-label="Gamepad" class="ml-[14px]"><svg class="h-[13px] w-4" viewBox="0 0 16 13"><path d="M3 1h3l1 1h2l1-1h3l2 5v6l-2 .5L11 8H5l-2 4.500L1 12V6z" fill="#eceaec" stroke="#999ca3" stroke-width=".8" /><circle cx="4.500" cy="4" r="1.200" fill="#667" /><circle cx="11.500" cy="4" r="1.200" fill="#a55" /></svg></button>

      <div class="ml-auto flex items-center">
        <svg class="h-1 w-[7px] rotate-180"><use href="#caret" /></svg>
        <svg class="ml-3 h-[11px] w-[14px]" viewBox="0 0 14 11"><path d="M1.500 11V9M4 11V7.500M6.500 11V5.500M9 11V3.500M11.500 11V1" stroke="#39475c" stroke-width="2.600" /><path d="M1.500 10.500V9M4 10.500V8M6.500 10.500V6M9 10.500V4M11.500 10.500V1.500" stroke="#fff" stroke-width="1.500" /></svg>
        <svg class="ml-2 size-[13px]" viewBox="0 0 13 13"><path d="M1 4.500h2.500L7 1v11L3.500 8.500H1z" fill="#fff" stroke="#55647a" stroke-width=".7" /><path d="M9 4q1.500 2.500 0 5M11 3q2 3.500 0 7" fill="none" stroke="#fff" /></svg>
        <svg class="ml-2 size-[13px]" viewBox="0 0 13 13"><path d="M3 1l3 1 5-2 1 4-1 3 1.500 5-4-1-3 1-5 .5L2 8 1 5z" fill="#ff7a00" /><text x="6.500" y="9.500" text-anchor="middle" font-family="Open Sans" font-weight="bold" font-size="9" fill="#fff">a</text></svg>
        <svg class="ml-2 size-[14px]" viewBox="0 0 14 14"><path d="M4 .5L7 2.500 4 4.700.8 2.500zM10 .5l3.200 2L10 4.700 7 2.500zM.8 6.900L4 4.700 7 6.900 4 9zM7 6.900l3-2.200 3.200 2.200L10 9zM4 10l3-2 3 2-3 2.500z" fill="#fff" stroke="#334" stroke-width=".5" /><circle cx="10" cy="10" r="3.700" fill="#2fa52f" /><path d="M8.300 10l1.300 1.500 2-3" fill="none" stroke="#fff" stroke-width="1.200" /></svg>
        <time class="ml-4">10:25 PM</time>
        <button aria-label="Show desktop" class="ml-2 h-full w-[13px] border-l border-[#40506a] bg-linear-to-br from-[#57677e] to-[#94a3b8]"></button>
      </div>
    </footer>

    <script>
      const tree = [
        [0, "star", "Favorites"],
        [1, "dropbox", "Dropbox"],
        [1, "screen", "Desktop"],
        [1, "downloads", "Downloads"],
        [1, "recent", "Recent Places"],
        null,
        [0, "screen", "Desktop"],
        [1, "library", "Libraries"],
        [2, "doc", "Documents"],
        [2, "music", "Music"],
        [2, "picture", "Pictures"],
        [2, "video", "Videos"],
        [1, "homegroup", "Homegroup"],
        [1, "user", "Aura"],
        [1, "computer", "Computer"],
        [2, "windrive", "Aura (C:)"],
        [2, "drive", "HP_RECOVERY"],
        [2, "cd", "CD Drive"],
        [2, "usb", "KINGSTON"],
        [2, "usbx", "USB_Storage"],
        [1, "network", "Network"],
        [1, "control", "Control Panel"],
        [1, "recycle", "Recycle Bin"],
        [1, "mini", "Calibre Library"],
      ];
      const indent = ["pl-[16px]", "pl-[25px]", "pl-[34px]"];

      document.getElementById("tree").innerHTML = tree
        .map((row) => {
          if (!row) return `<li class="flex-1"></li>`;
          const [level, icon, name] = row;
          const look = name === "Documents" ? "rounded-xs border-[#dcdcdc] bg-linear-to-b from-[#f8f8f8] to-[#e8e8e8]" : "border-transparent";
          return `<li class="flex min-h-0 flex-1 items-center gap-[5px] border whitespace-nowrap ${indent[level]} ${look}">
            <svg class="size-[14px] shrink-0"><use href="#${icon}" /></svg>${name}</li>`;
        })
        .join("");

      const files = [
        ["folder-word", "Commissions"],
        ["folder-pages", "Crossovers"],
        ["folder-pages", "Harry Potter"],
        ["folder-pages", "Hide and Seek"],
        ["folder-pages", "Homestuck"],
        ["folder-pages", "In the Interest of Change"],
        ["folder-pages", "Log Horizon"],
        ["folder-pages", "NaNo 2015"],
        ["folder-empty", "Not Oneshots, But Not Likely to be Continued Either"],
        ["folder-word", "Oneshots"],
        ["folder-pages", "Original"],
        ["folder-pages", "Sailor Moon"],
        ["folder-pages", "SAO"],
        ["folder-pages", "Unfiled Notes"],
        ["rtf", "Agrarian Whys.rtf"],
        ["rtf", "Akura-ou Character Study.rtf"],
        ["rtf", "Arrow Fic- No Lies.rtf"],
        ["rtf", "Atheism storyessay.rtf"],
        ["rtf", "Builder Challenge, TTH.rtf"],
        ["rtf", "Circle of Magic Loops.rtf"],
        ["rtf", "Dreaming of Adami.rtf"],
        ["rtf", ""], ["rtf", ""], ["rtf", ""], ["rtf", ""], ["rtf", ""], ["rtf", ""], ["rtf", ""],
      ];

      document.getElementById("files").innerHTML = files
        .map(([icon, name]) => {
          const look = icon === "folder-empty" ? "rounded-xs border-[#d9d9d9] bg-linear-to-b from-[#f8f8f8] to-[#e5e5e5]" : "border-transparent";
          return `<div class="flex flex-col items-center border py-px ${look}">
            <svg class="h-[85px] w-[86px] shrink-0"><use href="#${icon}" /></svg><span class="max-w-[82px]">${name}</span></div>`;
        })
        .join("");
    </script>
  </body>
</html>
